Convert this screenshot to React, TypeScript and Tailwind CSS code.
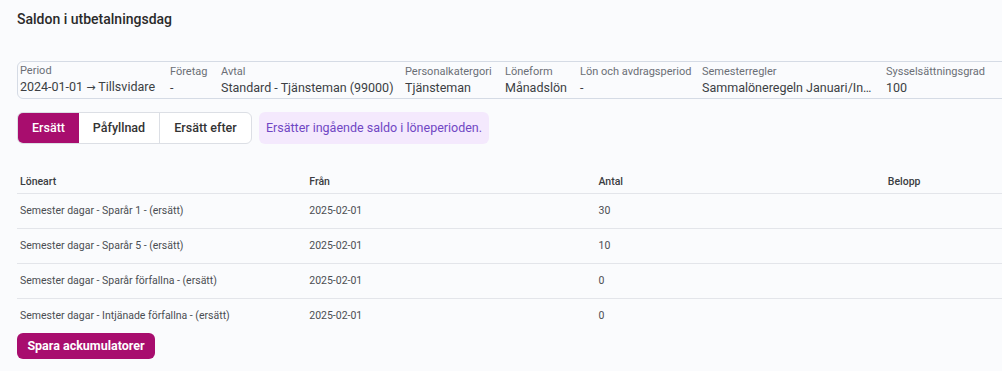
import React from 'react';

const info = [
  { label: 'Period', value: 'period', w: 'w-[150px]', cut: false },
  { label: 'Företag', value: '-', w: 'w-[51px]', cut: false },
  { label: 'Avtal', value: 'Standard - Tjänsteman (99000)', w: 'w-[184px]', cut: false },
  { label: 'Personalkatergori', value: 'Tjänsteman', w: 'w-[100px]', cut: false },
  { label: 'Löneform', value: 'Månadslön', w: 'w-[75px]', cut: false },
  { label: 'Lön och avdragsperiod', value: '-', w: 'w-[122px]', cut: false },
  { label: 'Semesterregler', value: 'Sammalöneregeln Januari/Instämning', w: 'w-[184px]', cut: true },
  { label: 'Sysselsättningsgrad', value: '100', w: 'w-[116px]', cut: false },
];

const rows = [
  { name: 'Semester dagar - Sparår 1 - (ersätt)', from: '2025-02-01', antal: '30' },
  { name: 'Semester dagar - Sparår 5 - (ersätt)', from: '2025-02-01', antal: '10' },
  { name: 'Semester dagar - Sparår förfallna - (ersätt)', from: '2025-02-01', antal: '0' },
  { name: 'Semester dagar - Intjänade förfallna - (ersätt)', from: '2025-02-01', antal: '0' },
];

const App: React.FC = () => {
  return (
    <div className="h-[371px] w-[1002px] overflow-hidden bg-[#fafbfd] font-['Roboto',sans-serif] text-[#333]">
      <div className="pl-[17px] pt-[10px]">
        {/* title */}
        <h2 className="text-[14px] font-medium leading-[18px] text-[#2a2a2a]">Saldon i utbetalningsdag</h2>

        {/* info strip */}
        <div className="mt-[33px] flex h-[38px] w-[1100px] items-center rounded-l-md border border-[#d5dbe5] pl-[2px]">
          {info.map((c) => (
            <div key={c.label} className={`${c.w} shrink-0 whitespace-nowrap`}>
              <div className="text-[11px] leading-[14px] text-[#6b6f76]">{c.label}</div>
              <div
                className={`text-[12.5px] leading-[17px] text-[#3c3f44] ${
                  c.cut ? 'mr-[14px] truncate' : ''
                }`}
              >
                {c.value === 'period' ? (
                  <>
                    2024-01-01 <span className="font-['DejaVu_Sans',sans-serif] text-[11px]">→</span> Tillsvidare
                  </>
                ) : (
                  c.value
                )}
              </div>
            </div>
          ))}
        </div>

        {/* mode tabs */}
        <div className="mt-[13px] flex items-center gap-[7px]">
          <div className="flex h-[32px] overflow-hidden rounded-md border border-[#dcdfe5] bg-white text-[12.5px] font-medium">
            <button type="button" className="w-[61px] bg-[#a80d6e] text-white">Ersätt</button>
            <button type="button" className="w-[81px] border-r border-[#dcdfe5] text-[#333]">Påfyllnad</button>
            <button type="button" className="w-[91px] text-[#333]">Ersätt efter</button>
          </div>
          <div className="flex h-[32px] w-[230px] items-center justify-center whitespace-nowrap rounded-md bg-[#f4e9fd] text-[12.5px] text-[#7047c4]">
            Ersätter ingående saldo i löneperioden.
          </div>
        </div>

        {/* accumulators table */}
        <div className="mt-[30px] w-[1160px] text-[10.5px]">
          <div className="grid h-[20px] grid-cols-4 items-start border-b border-[#e3e5ea] pl-[3px] font-medium text-[#3a3d42]">
            <div>Löneart</div>
            <div>Från</div>
            <div>Antal</div>
            <div>Belopp</div>
          </div>
          {rows.map((r, i) => (
            <div
              key={r.name}
              className={`grid grid-cols-4 items-center pl-[3px] text-[#4a4d52] ${
                i < rows.length - 1 ? 'h-[35px] border-b border-[#e3e5ea]' : 'h-[34px]'
              }`}
            >
              <div>{r.name}</div>
              <div>{r.from}</div>
              <div>{r.antal}</div>
              <div></div>
            </div>
          ))}
        </div>

        <button
          type="button"
          className="h-[26px] w-[138px] rounded-md bg-[#a80d6e] text-[12.5px] font-bold text-white"
        >
          Spara ackumulatorer
        </button>
      </div>
    </div>
  );
};

export default App;
